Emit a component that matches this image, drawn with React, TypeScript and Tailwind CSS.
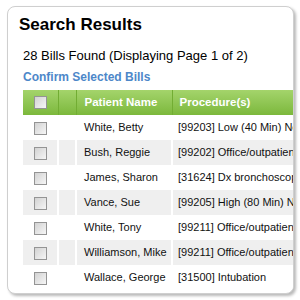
import React from 'react';

const bills = [
  { name: 'White, Betty', proc: '[99203] Low (40 Min) New Patient Visit' },
  { name: 'Bush, Reggie', proc: '[99202] Office/outpatient visit, new' },
  { name: 'James, Sharon', proc: '[31624] Dx bronchoscope/lavage' },
  { name: 'Vance, Sue', proc: '[99205] High (80 Min) New Patient Visit' },
  { name: 'White, Tony', proc: '[99211] Office/outpatient visit, est' },
  { name: 'Williamson, Mike', proc: '[99211] Office/outpatient visit, est' },
  { name: 'Wallace, George', proc: '[31500] Intubation' },
];

function Box() {
  return (
    <span className="inline-block w-[13px] h-[13px] border border-[#949494] bg-gradient-to-br from-[#d2d2d2] to-[#f6f6f6] align-middle" />
  );
}

export default function App() {
  return (
    <div className="w-[300px] h-[300px] bg-white pt-[6px] pl-[7px] font-['Liberation_Sans',Arial,sans-serif]">
      <div className="w-[287px] h-[288px] border border-[#cfcfcf] rounded-[8px] bg-white overflow-hidden shadow-[2px_2px_3px_rgba(0,0,0,0.28)]">
        <h1 className="mt-[7px] ml-[11px] text-[17px] leading-[22px] font-bold text-black">Search Results</h1>
        <p className="mt-[12px] ml-[15px] text-[13px] leading-[16px] text-black">28 Bills Found (Displaying Page 1 of 2)</p>
        <p className="mt-[6px] ml-[15px] text-[12px] leading-[15px] font-bold text-[#4d87c9]">Confirm Selected Bills</p>
        <table className="mt-[5px] ml-[15px] w-[420px] table-fixed border-collapse text-[11px]">
          <colgroup>
            <col className="w-[35px]" />
            <col className="w-[18px]" />
            <col className="w-[96px]" />
            <col />
          </colgroup>
          <thead>
            <tr className="h-[25px] bg-gradient-to-b from-[#a4d46b] to-[#7cb83b] text-white text-[11.5px] font-bold text-left">
              <th className="border-r border-[#72ad33] text-center"><Box /></th>
              <th className="border-r border-[#72ad33]" />
              <th className="border-r border-[#72ad33] pl-[8px] font-bold">Patient Name</th>
              <th className="pl-[7px] font-bold">Procedure(s)</th>
            </tr>
          </thead>
          <tbody>
            {bills.map((b, i) => (
              <tr key={b.name} className={`h-[25px] ${i % 2 === 1 ? 'bg-[#efefef]' : 'bg-white'} text-[#111]`}>
                <td className="border-r-2 border-white text-center"><Box /></td>
                <td className="border-r-2 border-white" />
                <td className="border-r-2 border-white pl-[7px] whitespace-nowrap overflow-hidden">{b.name}</td>
                <td className="pl-[5px] whitespace-nowrap overflow-hidden">{b.proc}</td>
              </tr>
            ))}
          </tbody>
        </table>
      </div>
    </div>
  );
}
